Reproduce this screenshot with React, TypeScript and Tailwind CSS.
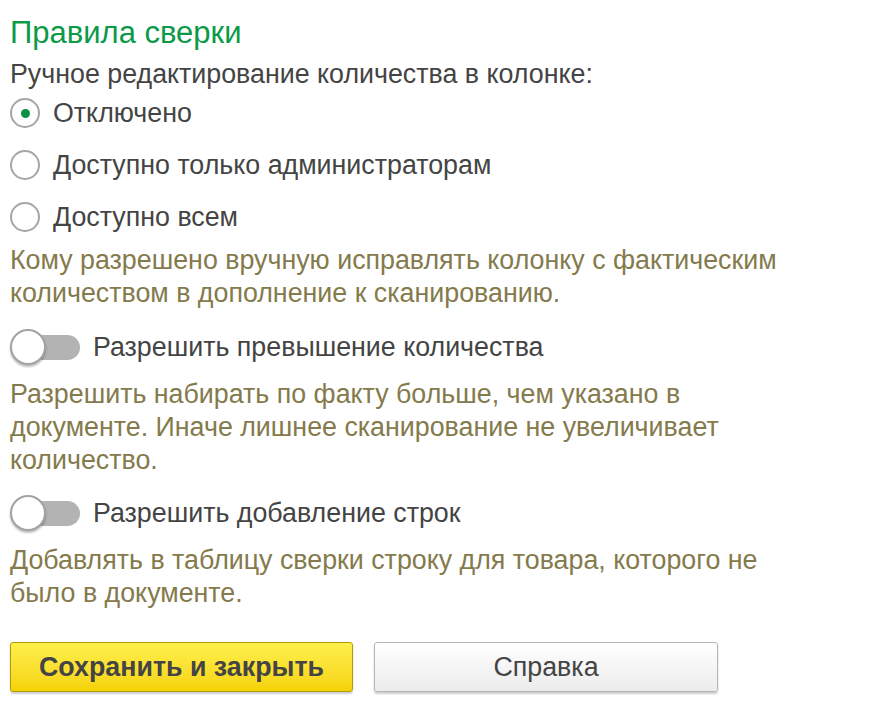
import { useState } from "react";

const font = { fontFamily: '"Liberation Sans", Arial, sans-serif' };

function Radio({ checked, label, onClick }: { checked: boolean; label: string; onClick: () => void }) {
  return (
    <button onClick={onClick} className="flex h-[44px] items-center gap-[13px] text-left">
      <span className="flex h-[30px] w-[30px] items-center justify-center rounded-full border-2 border-[#a6a6a6] bg-white">
        {checked && <span className="h-[9px] w-[9px] rounded-full bg-[#0a9146]" />}
      </span>
      <span className="text-[26.8px] leading-[33px] text-[#444444]">{label}</span>
    </button>
  );
}

function Toggle({ on, label, onClick }: { on: boolean; label: string; onClick: () => void }) {
  return (
    <button onClick={onClick} className="flex h-[36px] items-center gap-[13px] text-left">
      <span className="relative h-[36px] w-[70px]">
        <span className={`absolute left-[18px] top-[6px] h-[25px] w-[52px] rounded-full ${on ? "bg-[#0a9146]" : "bg-[#b3b3b3]"}`} />
        <span
          className={`absolute top-0 h-[36px] w-[36px] rounded-full border-2 border-[#a3a3a3] bg-white shadow-[0_2px_2px_rgba(0,0,0,0.25)] ${on ? "left-[34px]" : "left-0"}`}
        />
      </span>
      <span className="text-[26.8px] leading-[33px] text-[#444444]">{label}</span>
    </button>
  );
}

function Hint({ children, className = "" }: { children: React.ReactNode; className?: string }) {
  return <p className={`text-[26.8px] leading-[33px] text-[#847a4c] ${className}`}>{children}</p>;
}

export default function App() {
  const [mode, setMode] = useState(0);
  const [excess, setExcess] = useState(false);
  const [addRows, setAddRows] = useState(false);

  const modes = ["Отключено", "Доступно только администраторам", "Доступно всем"];

  return (
    <div className="min-h-[715px] w-[878px] bg-white pl-[10px] pt-[15px]" style={font}>
      <h1 className="text-[31px] leading-[36px] text-[#0a9a48]">Правила сверки</h1>
      <p className="mt-[7px] text-[26.8px] leading-[33px] text-[#444444]">
        Ручное редактирование количества в колонке:
      </p>

      <div className="flex flex-col gap-[8px]">
        {modes.map((m, i) => (
          <Radio key={m} label={m} checked={mode === i} onClick={() => setMode(i)} />
        ))}
      </div>

      <Hint className="mt-[5px] max-w-[840px]">
        Кому разрешено вручную исправлять колонку с фактическим количеством в дополнение к сканированию.
      </Hint>

      <div className="mt-[19px]">
        <Toggle on={excess} label="Разрешить превышение количества" onClick={() => setExcess((v) => !v)} />
      </div>
      <Hint className="mt-[13px] max-w-[765px]">
        Разрешить набирать по факту больше, чем указано в документе. Иначе лишнее сканирование не увеличивает
        количество.
      </Hint>

      <div className="mt-[18px]">
        <Toggle on={addRows} label="Разрешить добавление строк" onClick={() => setAddRows((v) => !v)} />
      </div>
      <Hint className="mt-[13px] max-w-[790px]">
        Добавлять в таблицу сверки строку для товара, которого не было в документе.
      </Hint>

      <div className="mt-[32px] flex gap-[21px]">
        <button className="h-[50px] w-[343px] rounded-[3px] border border-[#b19b00] bg-gradient-to-b from-[#fff04a] to-[#f5d300] text-[26.8px] font-bold text-[#444444] shadow-[0_2px_2px_rgba(0,0,0,0.2)]">
          Сохранить и закрыть
        </button>
        <button className="h-[50px] w-[344px] rounded-[3px] border border-[#b5b5b5] bg-gradient-to-b from-white to-[#ececec] text-[26.8px] text-[#444444] shadow-[0_2px_2px_rgba(0,0,0,0.2)]">
          Справка
        </button>
      </div>
    </div>
  );
}
